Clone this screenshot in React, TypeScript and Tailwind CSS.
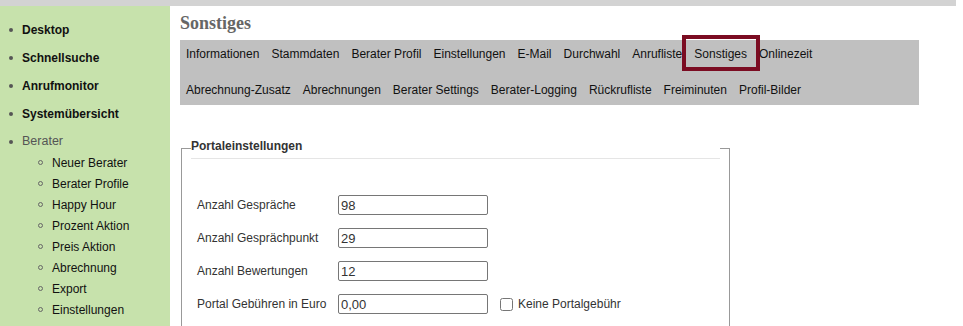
import React from "react";

const TOP_ITEMS = ["Desktop", "Schnellsuche", "Anrufmonitor", "Systemübersicht"];

const SUB_ITEMS = [
  "Neuer Berater",
  "Berater Profile",
  "Happy Hour",
  "Prozent Aktion",
  "Preis Aktion",
  "Abrechnung",
  "Export",
  "Einstellungen",
];

const NAV_ROW_1 = [
  "Informationen",
  "Stammdaten",
  "Berater Profil",
  "Einstellungen",
  "E-Mail",
  "Durchwahl",
  "Anrufliste",
  "Sonstiges",
  "Onlinezeit",
];

const NAV_ROW_2 = [
  "Abrechnung-Zusatz",
  "Abrechnungen",
  "Berater Settings",
  "Berater-Logging",
  "Rückrufliste",
  "Freiminuten",
  "Profil-Bilder",
];

const FIELDS = [
  { label: "Anzahl Gespräche", value: "98" },
  { label: "Anzahl Gesprächpunkt", value: "29" },
  { label: "Anzahl Bewertungen", value: "12" },
  { label: "Portal Gebühren in Euro", value: "0,00", checkbox: true },
];

function Sidebar() {
  return (
    <aside className="w-[170px] shrink-0 bg-[#c7e2ac] pt-[10px]">
      {TOP_ITEMS.map((item) => (
        <div key={item} className="flex h-[28px] items-center">
          <span className="ml-[9px] h-[4px] w-[4px] rounded-full bg-[#555]" />
          <span className="ml-[9px] text-[12px] font-bold text-[#111]">{item}</span>
        </div>
      ))}

      {/* Berater group */}
      <div className="mt-[3px] flex h-[21px] items-center">
        <span className="ml-[9px] h-[4px] w-[4px] rounded-full bg-[#555]" />
        <span className="ml-[9px] text-[12.5px] text-[#555]">Berater</span>
      </div>
      {SUB_ITEMS.map((item) => (
        <div key={item} className="flex h-[21px] items-center">
          <span className="ml-[38px] h-[5px] w-[5px] rounded-full border border-[#666]" />
          <span className="ml-[9px] text-[12px] text-[#111]">{item}</span>
        </div>
      ))}
    </aside>
  );
}

function NavItem({ label, active }: { label: string; active?: boolean }) {
  if (active) {
    return (
      <span className="-mb-[10px] -ml-[12px] -mr-[13px] -mt-[12px] border-[4px] border-[#7b0c22] pb-[6px] pl-[8px] pr-[9px] pt-[8px]">
        {label}
      </span>
    );
  }
  return <span className="whitespace-nowrap">{label}</span>;
}

export default function App() {
  return (
    <div className="flex h-[326px] w-[963px] flex-col overflow-hidden bg-white font-['Liberation_Sans',Arial,sans-serif]">
      <div className="h-[6px] w-[956px] shrink-0 bg-[#d3d3d3]" />
      <div className="flex min-h-0 flex-1">
        <Sidebar />

        <main className="ml-[10px] flex-1">
          <h1 className="mt-[7px] h-[21px] font-['Liberation_Serif',serif] text-[18px] font-bold leading-[21px] text-[#666]">
            Sonstiges
          </h1>

          {/* Tabs */}
          <nav className="mt-[6px] w-[739px] bg-[#c0c0c0] pb-[8px] pl-[6px] pt-[7px] text-[12px] leading-[14px] text-[#111]">
            <div className="flex gap-[12px]">
              {NAV_ROW_1.map((item) => (
                <NavItem key={item} label={item} active={item === "Sonstiges"} />
              ))}
            </div>
            <div className="mt-[22px] flex gap-[12px]">
              {NAV_ROW_2.map((item) => (
                <NavItem key={item} label={item} />
              ))}
            </div>
          </nav>

          {/* Portaleinstellungen */}
          <fieldset className="ml-[1px] mt-[32px] w-[549px] border border-[#999] px-[9px] pb-[20px]">
            <legend className="w-full border-b border-[#e5e5e5] pb-[3px] text-[12px] font-bold leading-[18px] text-[#333]">
              Portaleinstellungen
            </legend>
            <div className="mt-[36px] flex flex-col gap-[13px] pl-[6px]">
              {FIELDS.map((f) => (
                <div key={f.label} className="flex h-[20px] items-center">
                  <label className="w-[141px] text-[12px] text-[#333]">{f.label}</label>
                  <input
                    className="h-[20px] w-[150px] rounded-[2px] border border-[#767676] px-[2px] text-[13px] text-[#333]"
                    defaultValue={f.value}
                  />
                  {f.checkbox && (
                    <>
                      <input type="checkbox" className="m-0 ml-[12px] h-[13px] w-[13px]" />
                      <span className="ml-[5px] text-[12px] text-[#333]">Keine Portalgebühr</span>
                    </>
                  )}
                </div>
              ))}
            </div>
          </fieldset>
        </main>
      </div>
    </div>
  );
}
